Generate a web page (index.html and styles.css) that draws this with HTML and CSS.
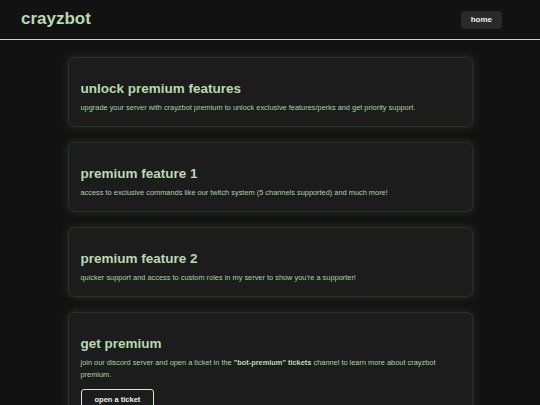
FILE: index.html
```html
<!DOCTYPE html>
<html>
<head>
<meta charset="utf-8">
<link rel="stylesheet" href="styles.css">
</head>
<body>
<header class="topbar">
  <div class="logo">crayzbot</div>
  <a class="nav-btn" href="#">home</a>
</header>
<main class="content">
  <section class="card">
    <h2>unlock premium features</h2>
    <p>upgrade your server with crayzbot premium to unlock exclusive features/perks and get priority support.</p>
  </section>
  <section class="card">
    <h2>premium feature 1</h2>
    <p>access to exclusive commands like our twitch system (5 channels supported) and much more!</p>
  </section>
  <section class="card">
    <h2>premium feature 2</h2>
    <p>quicker support and access to custom roles in my server to show you're a supporter!</p>
  </section>
  <section class="card">
    <h2>get premium</h2>
    <p>join our discord server and open a ticket in the <strong>"bot-premium" tickets</strong> channel to learn more about crayzbot premium.</p>
    <a class="ticket-btn" href="#">open a ticket</a>
  </section>
</main>
</body>
</html>
```
FILE: styles.css
```css
html, body {
  margin: 0;
  padding: 0;
  background: #121212;
  font-family: "Liberation Sans", Arial, sans-serif;
  overflow: hidden;
}
.topbar {
  height: 40px;
  box-sizing: border-box;
  border-bottom: 1px solid #b8e0b8;
  display: flex;
  align-items: center;
  justify-content: space-between;
  padding: 0 38px 0 21px;
  background: #121212;
}
.logo {
  color: #b9d9b0;
  font-weight: bold;
  font-size: 17px;
  margin-top: -1px;
}
.nav-btn {
  background: #2a2a2a;
  color: #f0f0f0;
  font-weight: bold;
  font-size: 8px;
  text-decoration: none;
  padding: 5px 10px;
  border-radius: 4px;
  line-height: 8px;
}
.content {
  width: 405px;
  margin: 17px auto 0;
  display: flex;
  flex-direction: column;
  gap: 15px;
}
.card {
  background: #1c1c1c;
  border: 1px solid #283228;
  border-radius: 6px;
  box-shadow: 0 0 10px rgba(140, 210, 140, 0.16);
  padding: 22px 12px 12px;
}
.card h2 {
  margin: 0 0 5px;
  font-size: 13.5px;
  line-height: 17px;
  color: #b9d9b0;
}
.card p {
  margin: 0;
  font-size: 7.4px;
  line-height: 12px;
  color: #a9d4a6;
}
.card strong {
  color: #b5dcb0;
}
.ticket-btn {
  display: inline-block;
  margin-top: 8px;
  border: 1px solid #d8e8d8;
  border-radius: 3px;
  color: #f0f0f0;
  font-weight: bold;
  font-size: 7.5px;
  text-decoration: none;
  padding: 5px 13px;
  line-height: 9px;
}
```
